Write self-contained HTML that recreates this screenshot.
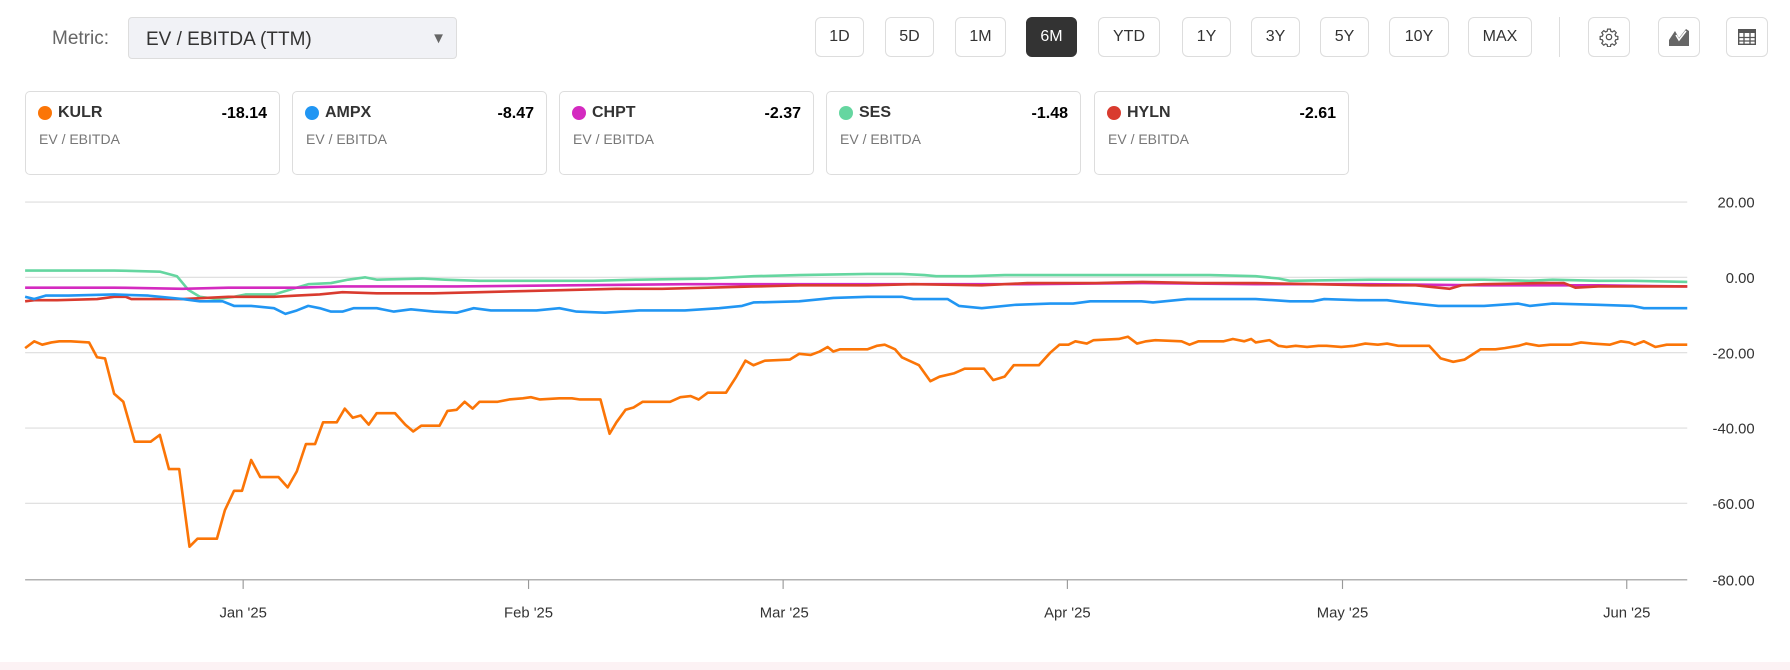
<!DOCTYPE html>
<html><head><meta charset="utf-8"><style>
*{box-sizing:border-box;margin:0;padding:0}
body{width:1790px;height:670px;background:#fff;font-family:"Liberation Sans",Arial,sans-serif;position:relative;overflow:hidden}
.abs{position:absolute}
.lbl{left:52px;top:28px;font-size:19px;color:#666}
.sel{left:128px;top:17px;width:329px;height:42px;background:#f1f2f6;border:1px solid #ddd;border-radius:4px;font-size:19px;color:#333;padding:11px 0 0 17px}
.sel .ar{position:absolute;right:10px;top:12px;font-size:15px;color:#666}
.btn{top:17px;height:40px;border:1px solid #ddd;border-radius:6px;font-size:16px;color:#333;display:flex;align-items:center;justify-content:center;background:#fff}
.btn.on{background:#333;color:#fff;border-color:#333}
.card{top:91px;width:255px;height:84px;border:1px solid #ddd;border-radius:5px;background:#fff}
.card .t{position:absolute;left:12px;top:12px;font-size:16px;font-weight:bold;color:#333;display:flex;align-items:center}
.card .t i{display:inline-block;width:14px;height:14px;border-radius:50%;margin-right:6px}
.card .v{position:absolute;right:12px;top:13px;font-size:16px;font-weight:bold;color:#000}
.card .s{position:absolute;left:13px;top:39px;font-size:14px;color:#777}
</style></head><body>
<div class="abs lbl">Metric:</div>
<div class="abs sel">EV / EBITDA (TTM)<span class="ar">▼</span></div>
<div class="abs btn" style="left:815px;width:49px">1D</div>
<div class="abs btn" style="left:885px;width:49px">5D</div>
<div class="abs btn" style="left:955px;width:51px">1M</div>
<div class="abs btn on" style="left:1026px;width:51px">6M</div>
<div class="abs btn" style="left:1098px;width:62px">YTD</div>
<div class="abs btn" style="left:1182px;width:49px">1Y</div>
<div class="abs btn" style="left:1251px;width:49px">3Y</div>
<div class="abs btn" style="left:1320px;width:49px">5Y</div>
<div class="abs btn" style="left:1389px;width:60px">10Y</div>
<div class="abs btn" style="left:1468px;width:64px">MAX</div>
<div class="abs" style="left:1559px;top:17px;width:1px;height:40px;background:#ddd"></div>
<div class="abs btn" style="left:1588px;width:42px"><svg width="20" height="20" viewBox="0 0 24 24" fill="none" stroke="#555" stroke-width="1.5"><circle cx="12" cy="12" r="3.2"/><path d="M10.3 2.5h3.4l.5 2.6 1.9.8 2.2-1.5 2.4 2.4-1.5 2.2.8 1.9 2.6.5v3.4l-2.6.5-.8 1.9 1.5 2.2-2.4 2.4-2.2-1.5-1.9.8-.5 2.6h-3.4l-.5-2.6-1.9-.8-2.2 1.5-2.4-2.4 1.5-2.2-.8-1.9-2.6-.5v-3.4l2.6-.5.8-1.9-1.5-2.2 2.4-2.4 2.2 1.5 1.9-.8z"/></svg></div>
<div class="abs btn" style="left:1658px;width:42px"><svg width="22" height="20" viewBox="0 0 22 20"><path d="M1 19 L1 13 L7 4 L11 11 L18 2 L21 4 L21 19Z" fill="#666"/><path d="M8 8 L11 13 L18 4" stroke="#fff" stroke-width="1.6" fill="none"/></svg></div>
<div class="abs btn" style="left:1726px;width:42px"><svg width="18" height="16" viewBox="0 0 18 16"><rect x="0" y="0" width="18" height="4" fill="#555"/><rect x="0.7" y="0.7" width="16.6" height="14.6" fill="none" stroke="#555" stroke-width="1.4"/><path d="M6 4V16M12 4V16M0 8.5H18M0 12H18" stroke="#555" stroke-width="1.3"/></svg></div>

<div class="abs card" style="left:25px"><div class="t"><i style="background:#fb7507"></i>KULR</div><div class="v">-18.14</div><div class="s">EV / EBITDA</div></div>
<div class="abs card" style="left:292px"><div class="t"><i style="background:#2196f3"></i>AMPX</div><div class="v">-8.47</div><div class="s">EV / EBITDA</div></div>
<div class="abs card" style="left:559px"><div class="t"><i style="background:#d42ac0"></i>CHPT</div><div class="v">-2.37</div><div class="s">EV / EBITDA</div></div>
<div class="abs card" style="left:826px"><div class="t"><i style="background:#65d6a0"></i>SES</div><div class="v">-1.48</div><div class="s">EV / EBITDA</div></div>
<div class="abs card" style="left:1094px"><div class="t"><i style="background:#d93b2f"></i>HYLN</div><div class="v">-2.61</div><div class="s">EV / EBITDA</div></div>

<div class="abs" style="left:0;top:662px;width:1790px;height:8px;background:#fcf2f4"></div>

<svg class="abs" style="left:0;top:0" width="1790" height="670" viewBox="0 0 1568 587" preserveAspectRatio="none">
<g stroke="#ddd" stroke-width="1">
<line x1="22" y1="177" x2="1478" y2="177"/><line x1="22" y1="243" x2="1478" y2="243"/><line x1="22" y1="309" x2="1478" y2="309"/><line x1="22" y1="375" x2="1478" y2="375"/><line x1="22" y1="441" x2="1478" y2="441"/>
</g>
<line x1="22" y1="508" x2="1478" y2="508" stroke="#999"/>
<g stroke="#999"><line x1="213" y1="508" x2="213" y2="516"/><line x1="463" y1="508" x2="463" y2="516"/><line x1="686" y1="508" x2="686" y2="516"/><line x1="935" y1="508" x2="935" y2="516"/><line x1="1176" y1="508" x2="1176" y2="516"/><line x1="1425" y1="508" x2="1425" y2="516"/></g>
<g font-family="Liberation Sans,Arial,sans-serif" font-size="13" fill="#333" text-anchor="end">
<text x="1537" y="182">20.00</text><text x="1537" y="248">0.00</text><text x="1537" y="314">-20.00</text><text x="1537" y="380">-40.00</text><text x="1537" y="446">-60.00</text><text x="1537" y="513">-80.00</text>
</g>
<g font-family="Liberation Sans,Arial,sans-serif" font-size="13" fill="#333" text-anchor="middle">
<text x="213" y="541">Jan '25</text><text x="463" y="541">Feb '25</text><text x="687" y="541">Mar '25</text><text x="935" y="541">Apr '25</text><text x="1176" y="541">May '25</text><text x="1425" y="541">Jun '25</text>
</g>
<g fill="none" stroke-width="2.3" stroke-linejoin="round">
<polyline stroke="#65d6a0" points="22,237 100,237 140,238 155,242 165,254 175,260 190,262 205,260 215,258 240,258 260,252 270,249 290,248 305,245 320,243 330,245 370,244 390,245 420,246 480,246 520,246 560,245 620,244 660,242 700,241 760,240 790,240 810,241 820,242 850,242 880,241 920,241 1000,241 1060,241 1100,242 1120,244 1130,246 1200,245 1300,245 1340,246 1360,245 1400,246 1430,246 1478,247"/>
<polyline stroke="#d42ac0" points="22,252 100,252 160,253 200,252 260,252 300,251 400,251 500,250 600,249 700,249 800,249 900,249 1000,248 1100,249 1200,249 1300,250 1350,250 1400,250 1478,251"/>
<polyline stroke="#d93b2f" points="22,264 30,263 50,263 85,262 100,260 110,260 115,262 160,262 200,260 240,260 260,259 280,258 300,256 330,257 380,257 420,256 460,255 500,254 540,253 580,253 620,252 660,251 700,250 760,250 800,249 860,250 900,248 960,248 1000,247 1050,248 1100,248 1150,249 1200,250 1240,250 1270,253 1280,250 1300,249 1350,248 1370,248 1380,252 1400,251 1478,251"/>
<polyline stroke="#2196f3" points="22,260 30,262 40,259 60,259 100,258 130,259 160,262 175,264 195,264 205,268 220,268 240,270 250,275 260,272 270,268 280,270 290,273 300,273 310,270 330,270 345,273 360,271 380,273 400,274 415,270 430,272 450,272 470,272 490,270 505,273 530,274 560,272 600,272 630,270 650,268 660,265 700,264 730,261 760,260 790,260 800,262 830,262 840,268 860,270 890,267 920,266 940,266 955,264 990,264 1000,264 1010,265 1040,262 1070,262 1100,262 1130,264 1150,264 1160,262 1190,263 1215,263 1230,265 1260,268 1290,268 1300,268 1330,266 1340,268 1360,266 1400,267 1430,268 1440,270 1478,270"/>
<polyline stroke="#fb7507" points="22,305 30,299 37,302 45,300 52,299 62,299 78,300 85,313 92,314 100,345 108,352 118,387 132,387 140,381 148,411 157,411 166,479 173,472 190,472 197,447 205,430 212,430 220,403 228,418 244,418 252,427 260,413 268,389 276,389 283,370 295,370 302,358 309,366 316,364 323,372 330,362 346,362 355,372 362,378 369,373 385,373 392,360 400,359 407,352 414,358 420,352 436,352 446,350 458,349 465,348 473,350 490,349 501,349 508,350 526,350 534,380 540,370 548,359 555,357 563,352 587,352 596,348 605,347 612,350 620,344 636,344 645,330 653,316 660,320 670,316 692,315 700,310 710,311 718,308 725,304 730,308 736,306 760,306 768,303 775,302 784,306 790,313 805,320 815,334 823,330 836,327 845,323 862,323 870,333 880,330 888,320 910,320 920,309 928,302 936,302 942,299 952,301 958,298 980,297 988,295 996,301 1004,299 1012,298 1035,299 1042,302 1050,299 1072,299 1080,297 1090,299 1096,297 1100,300 1112,298 1120,303 1127,304 1135,303 1145,304 1155,303 1162,303 1175,304 1186,303 1196,301 1207,302 1215,301 1225,303 1252,303 1262,314 1273,317 1283,315 1297,306 1310,306 1318,305 1330,303 1337,301 1348,303 1358,302 1376,302 1385,300 1395,301 1410,302 1420,299 1427,300 1432,302 1440,299 1450,304 1460,302 1478,302"/>
</g>
</svg>
</body></html>
